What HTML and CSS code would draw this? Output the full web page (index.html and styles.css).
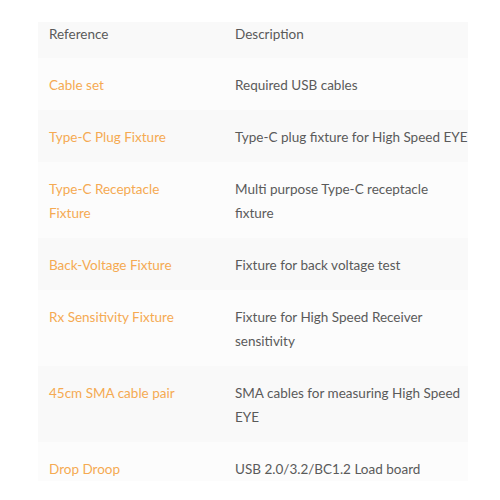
FILE: index.html
```html
<!DOCTYPE html>
<html>
<head>
<meta charset="utf-8">
<link rel="stylesheet" href="styles.css">
</head>
<body>
<div class="wrap">
<table class="parts">
  <thead>
    <tr><th class="ref">Reference</th><th class="desc">Description</th></tr>
  </thead>
  <tbody>
    <tr><td class="ref">Cable set</td><td class="desc">Required USB cables</td></tr>
    <tr><td class="ref">Type-C Plug Fixture</td><td class="desc">Type-C plug fixture for High Speed EYE</td></tr>
    <tr><td class="ref">Type-C Receptacle Fixture</td><td class="desc">Multi purpose Type-C receptacle fixture</td></tr>
    <tr><td class="ref">Back-Voltage Fixture</td><td class="desc">Fixture for back voltage test</td></tr>
    <tr><td class="ref">Rx Sensitivity Fixture</td><td class="desc">Fixture for High Speed Receiver sensitivity</td></tr>
    <tr><td class="ref">45cm SMA cable pair</td><td class="desc">SMA cables for measuring High Speed EYE</td></tr>
    <tr><td class="ref">Drop Droop</td><td class="desc">USB 2.0/3.2/BC1.2 Load board</td></tr>
  </tbody>
</table>
</div>
</body>
</html>
```
FILE: styles.css
```css
html, body {
  margin: 0;
  padding: 0;
  background: #ffffff;
}
.wrap {
  padding: 22px 32px 0 38px;
}
.parts {
  width: 430px;
  border-collapse: collapse;
  table-layout: fixed;
  font-family: Lato, "Liberation Sans", sans-serif;
  font-size: 13.5px;
  line-height: 24px;
  color: #5a5a5a;
}
.parts th {
  font-weight: normal;
  text-align: left;
  vertical-align: top;
  padding: 0 0 12px 11px;
  background: #f9f9f9;
}
.parts td {
  vertical-align: top;
  padding: 15px 0 13px 11px;
}
.parts .ref {
  width: 175px;
}
.parts td.ref {
  color: #f5aa52;
  padding-right: 40px;
}
.parts tbody tr:nth-child(odd) td {
  background: #fcfcfc;
}
.parts tbody tr:nth-child(even) td {
  background: #f9f9f9;
}
.parts tbody tr:last-child td {
  padding-bottom: 0;
}
```
